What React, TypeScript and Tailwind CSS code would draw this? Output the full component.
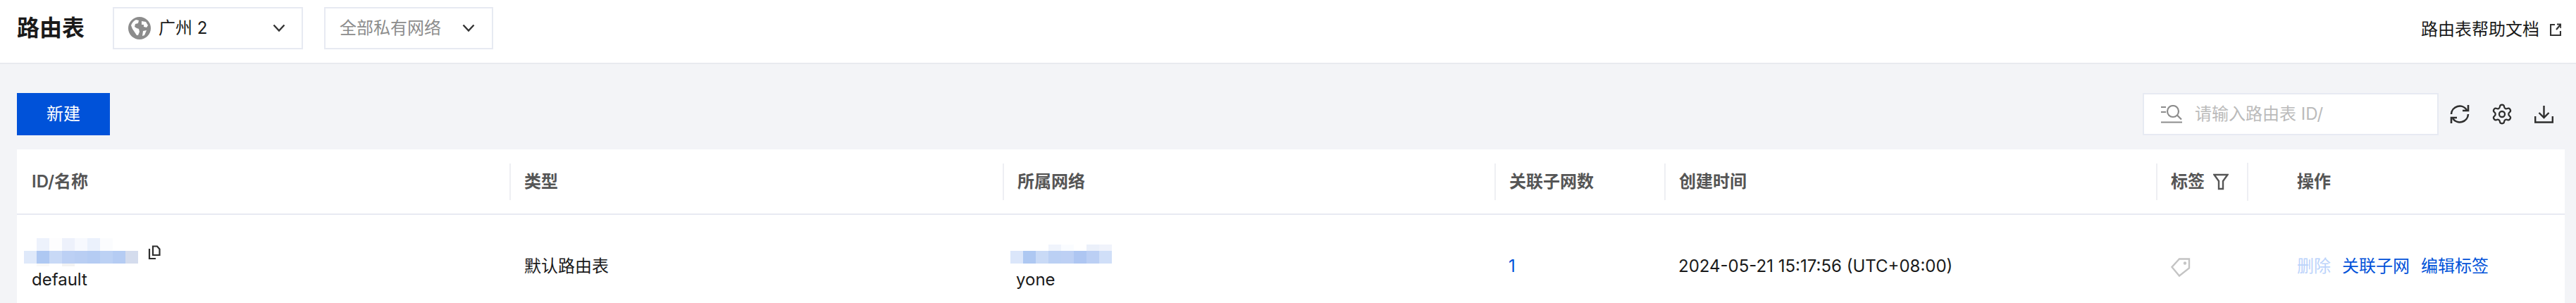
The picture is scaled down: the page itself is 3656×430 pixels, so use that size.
import { Settings } from "lucide-react";

const headers = [
  { label: "ID/名称", first: true },
  { label: "类型" },
  { label: "所属网络" },
  { label: "关联子网数" },
  { label: "创建时间" },
];

const gridCols = "grid grid-cols-[699px_700px_698px_241px_698px_129px_451px]";

const idTop = ["#ffffff", "#edf2fc", "#fdfdfe", "#edf1fb", "#f7f9fe", "#ebf1fc", "#fbfcfe", "#ffffff", "#ffffff"];
const idMid = ["#dfe9fa", "#aec8f2", "#c8d9f6", "#bcd0f4", "#b9cef3", "#b5ccf3", "#bcd1f4", "#b5ccf3", "#d4dced"];
const idBottom = ["#ffffff", "#f8f8f8", "#ffffff", "#f3f3f3", "#ffffff", "#ffffff", "#ffffff", "#ffffff", "#ffffff"];
const netTop = ["#ffffff", "#ffffff", "#ffffff", "#f0f4fc", "#fafcff", "#ffffff", "#ebf0fa", "#f0f3fb"];
const netMid = ["#dbe6fa", "#aec8f2", "#c9daf6", "#bbd0f4", "#bdd0f4", "#aec6f2", "#bbcff4", "#d0dff8"];

function MosaicRow({ cells, height }: { cells: string[]; height: string }) {
  return (
    <div className={`flex ${height}`}>
      {cells.map((c, i) => (
        <div key={i} className="w-[18px]" style={{ backgroundColor: c }} />
      ))}
    </div>
  );
}

function Chevron() {
  return (
    <svg width="18" height="12" viewBox="0 0 18 12" fill="none" stroke="#333" strokeWidth="2.4">
      <path d="M1.5 1.5 9 9.5l7.5-8" />
    </svg>
  );
}

function Globe() {
  return (
    <svg width="32" height="32" viewBox="0 0 32 32">
      <circle cx="16" cy="16" r="16" fill="#8c8c8c" />
      <path d="M4 12c1.5-4 4-6.500 7-8l4 1-1 4-4 1-1 4 3 2 3 1 1 4-2 5h-2l-4-6-2-3z" fill="#fff" />
      <path d="M19 6l6 1 3 5-2 3-4-1v-3h-3z M21 20l5-1-3 7-3 1z" fill="#fff" />
    </svg>
  );
}

export default function App() {
  return (
    <div className="h-[430px] overflow-hidden bg-[#f3f4f7] font-['Inter','Noto_Sans_CJK_SC',sans-serif] text-[24px] leading-[32px] text-[#1a1a1a]">
      <div className="flex h-[91px] items-start justify-between border-b-2 border-[#e8eaef] bg-white pl-[24px] pr-[21px] pt-[10px]">
        <div className="flex items-center">
          <h1 className="w-[136px] text-[32px] font-bold leading-[40px]">路由表</h1>
          <div className="flex h-[60px] w-[270px] items-center border-2 border-[#e7eaf2] pl-[20px] pr-[23px]">
            <Globe />
            <span className="ml-[11px] flex-1">广州 2</span>
            <Chevron />
          </div>
          <div className="ml-[30px] flex h-[60px] w-[240px] items-center border-2 border-[#e7eaf2] pl-[20px] pr-[24px]">
            <span className="flex-1 text-[#8c8c8c]">全部私有网络</span>
            <Chevron />
          </div>
        </div>
        <div className="flex items-center gap-[15px] pt-[16px]">
          <span>路由表帮助文档</span>
          <svg width="16" height="18" viewBox="0 0 16 18" fill="none" stroke="#333" strokeWidth="2.2">
            <path d="M7 2H1v15h14v-6M9 9l6-7M10 1.500h5.500V7" />
          </svg>
        </div>
      </div>

      <div className="pl-[24px] pr-[16px] pt-[41px]">
        <div className="flex h-[60px] items-center justify-between">
          <button className="flex h-[60px] w-[132px] items-center justify-center bg-[#0052d9] text-white">新建</button>
          <div className="flex items-center">
            <div className="flex h-[60px] w-[420px] items-center border-2 border-[#e7eaf2] bg-white pl-[24px]">
              <svg width="30" height="26" viewBox="0 0 30 26" fill="none" stroke="#8c8c8c" strokeWidth="2.2">
                <path d="M0 3h7M0 10h7M0 24.500h30" />
                <circle cx="17" cy="9" r="8" />
                <path d="m23 14.500 6 6" />
              </svg>
              <span className="ml-[18px] text-[#bbbbbb]">请输入路由表 ID/</span>
            </div>
            <div className="ml-[16px] mr-[16px] flex items-center gap-[30px]">
              <svg width="28" height="28" viewBox="0 0 28 28" fill="none" stroke="#2e2e2e" strokeWidth="2.600">
                <path d="M2 14A12 12 0 0 1 24 8M26 14A12 12 0 0 1 4 20" />
                <path d="M26 1v8h-8M2 27v-8h8" />
              </svg>
              <Settings size={32} color="#2e2e2e" strokeWidth={1.7} />
              <svg width="27" height="26" viewBox="0 0 27 26" fill="none" stroke="#2e2e2e" strokeWidth="2.400">
                <path d="M13.500 1v17M6.500 11l7 7 7-7M1.200 16v8.500h24.600V16" />
              </svg>
            </div>
          </div>
        </div>

        <div className="mt-[20px] bg-white">
          <div className={`${gridCols} h-[93px] items-center border-b-2 border-[#e8eaf2] font-semibold text-[#555555]`}>
            {headers.map((h) => (
              <div key={h.label} className={h.first ? "pl-[21px]" : "flex h-[52px] items-center border-l-2 border-[#eeeff3] pl-[19px]"}>
                {h.label}
              </div>
            ))}
            <div className="flex h-[52px] items-center border-l-2 border-[#eeeff3] pl-[19px]">
              标签
              <svg className="ml-[12px]" width="22" height="24" viewBox="0 0 22 24" fill="none" stroke="#555" strokeWidth="2.400">
                <path d="M1.500 2h19L14 11v11H8V11z" />
              </svg>
            </div>
            <div className="flex h-[54px] items-center border-l-2 border-[#eeeff3] pl-[69px]">操作</div>
          </div>

          <div className={`${gridCols} h-[130px] items-start`}>
            <div className="pl-[10px] pt-[33px]">
              <div className="flex items-start">
                <div className="flex w-[162px] flex-col">
                  <MosaicRow cells={idTop} height="h-[18px]" />
                  <MosaicRow cells={idMid} height="h-[18px]" />
                  <MosaicRow cells={idBottom} height="h-[4px]" />
                </div>
                <svg className="ml-[14px] mt-[10px]" width="18" height="20" viewBox="0 0 18 20" fill="none" stroke="#2e2e2e" strokeWidth="2.200">
                  <path d="M7 1.500h6l3.500 4V14H7zM2 5v14h9" />
                </svg>
              </div>
              <div className="pl-[11px] pt-[3px]">default</div>
            </div>
            <div className="pl-[21px] pt-[57px]">默认路由表</div>
            <div className="pl-[11px] pt-[42px]">
              <div className="flex w-[144px] flex-col">
                <MosaicRow cells={netTop} height="h-[9px]" />
                <MosaicRow cells={netMid} height="h-[18px]" />
              </div>
              <div className="pl-[8px] pt-[7px]">yone</div>
            </div>
            <div className="pl-[20px] pt-[57px] text-[#0052d9]">1</div>
            <div className="pl-[20px] pt-[57px]">2024-05-21 15:17:56 (UTC+08:00)</div>
            <div className="pl-[21px] pt-[61px]">
              <svg width="28" height="27" viewBox="0 0 28 27" fill="none" stroke="#c4c4c4" strokeWidth="2.400">
                <path d="M12 1.500h14v13L12 25.500 1.500 13z" />
                <circle cx="20" cy="7.500" r="1" />
              </svg>
            </div>
            <div className="flex gap-[16px] pl-[71px] pt-[57px] text-[#0052d9]">
              <span className="text-[#bbd3fb]">删除</span>
              <span>关联子网</span>
              <span>编辑标签</span>
            </div>
          </div>
        </div>
      </div>
    </div>
  );
}
